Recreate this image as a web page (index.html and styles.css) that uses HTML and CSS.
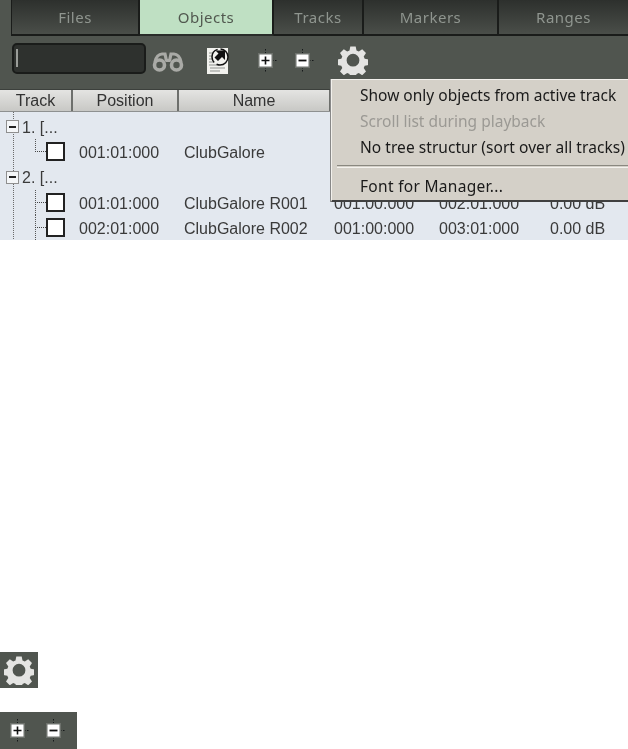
FILE: index.html
```html
<!DOCTYPE html>
<html lang="en">
<head>
<meta charset="utf-8">
<title>Object Manager</title>
<link rel="stylesheet" href="styles.css">
</head>
<body>
<svg class="defs" width="0" height="0" aria-hidden="true">
  <defs>
    <filter id="soft" x="-20%" y="-20%" width="140%" height="140%"><feGaussianBlur stdDeviation="0.45"/></filter>
    <symbol id="gear" viewBox="0 0 30 30">
      <path filter="url(#soft)" fill="#e4e4e2" fill-rule="evenodd" d="M12.300 1.500h5.400l.8 4 2.300 1 3.400-2.300 3.800 3.800-2.300 3.400 1 2.300 4 .8v5.400l-4 .8-1 2.300 2.300 3.400-3.800 3.800-3.400-2.300-2.300 1-.8 3.500h-5.400l-.8-3.500-2.300-1-3.400 2.300-3.800-3.800 2.300-3.400-1-2.300-4-.8v-5.400l4-.8 1-2.300-2.300-3.400 3.800-3.800 3.400 2.300 2.300-1zM15 8.800a6.400 6.400 0 1 0 0 12.800A6.400 6.400 0 0 0 15 8.800z"/>
    </symbol>
    <symbol id="plus" viewBox="0 0 20 24">
      <path fill="none" stroke="#15181a" stroke-width="1" stroke-dasharray="1.500 1.500" d="M8.500 0v5M8.500 18v6M15 11.500h5"/>
      <rect x="1" y="4" width="15" height="15" fill="#6d716c"/>
      <rect filter="url(#soft)" x="2.500" y="5.500" width="12" height="12" fill="#fff"/>
      <path fill="none" stroke="#111" stroke-width="1.600" d="M4.500 11.500h8M8.500 7.500v8"/>
    </symbol>
    <symbol id="minus" viewBox="0 0 20 24">
      <path fill="none" stroke="#15181a" stroke-width="1" stroke-dasharray="1.500 1.500" d="M8.500 0v5M8.500 18v6M15 11.500h5"/>
      <rect x="1" y="4" width="15" height="15" fill="#6d716c"/>
      <rect filter="url(#soft)" x="2.500" y="5.500" width="12" height="12" fill="#fff"/>
      <path fill="none" stroke="#111" stroke-width="1.800" d="M4.500 11.500h8"/>
    </symbol>
  </defs>
</svg>

<section class="panel">
  <nav class="tabs">
    <div class="tab tab-files">Files</div>
    <div class="tab tab-active">Objects</div>
    <div class="tab tab-tracks">Tracks</div>
    <div class="tab tab-markers">Markers</div>
    <div class="tab tab-ranges">Ranges</div>
  </nav>
  <div class="toolbar">
    <div class="search"><span class="caret"></span></div>
    <svg class="ico-bino" viewBox="0 0 32 20" aria-label="Find">
      <g filter="url(#soft)" fill="none" stroke="#a9aaa6">
        <circle cx="7.500" cy="13" r="5" stroke-width="3.600"/>
        <circle cx="24.500" cy="13" r="5" stroke-width="3.600"/>
        <path stroke-width="3.200" d="M3 10C4 5 7 2 10 2h3l1.500 7M29 10C28 5 25 2 22 2h-3l-1.500 7M13.500 8.500h5"/>
      </g>
    </svg>
    <svg class="ico-doc" viewBox="0 0 26 30" aria-label="Export">
      <path filter="url(#soft)" fill="#f2f2ee" d="M0 2h21v26H0z"/>
      <path stroke="#8f928f" stroke-width="1" d="M2 7h4M2 10h3M2 13h3M2 16h4M2 19h8M3 22h15M3 25h10"/>
      <circle cx="13" cy="11" r="8" fill="#f2f2ee"/>
      <circle cx="13" cy="11" r="8" fill="none" stroke="#111" stroke-width="1.500" stroke-dasharray="16 3"/>
      <path fill="#111" d="M8.500 4.500h9.500v9.500l-3-3-4 4-3.500-3.500 4-4z"/>
    </svg>
    <svg class="ico-plus"><use href="#plus"/></svg>
    <svg class="ico-minus"><use href="#minus"/></svg>
    <svg class="ico-gear"><use href="#gear"/></svg>
  </div>
</section>

<section class="list">
  <div class="head">
    <div class="hcell h-track">Track</div>
    <div class="hcell h-pos">Position</div>
    <div class="hcell h-name">Name</div>
    <div class="hcell h-rest"></div>
  </div>
  <div class="tree">
    <div class="row track"><span class="exp"></span><span class="tlabel">1. [...</span></div>
    <div class="row item last"><span class="branch"></span><span class="box"></span><span class="c-pos">001:01:000</span><span class="c-name">ClubGalore</span></div>
    <div class="row track"><span class="exp"></span><span class="tlabel">2. [...</span></div>
    <div class="row item"><span class="branch"></span><span class="box"></span><span class="c-pos">001:01:000</span><span class="c-name">ClubGalore R001</span><span class="c-a">001:00:000</span><span class="c-b">002:01:000</span><span class="c-c">0.00 dB</span></div>
    <div class="row item"><span class="branch"></span><span class="box"></span><span class="c-pos">002:01:000</span><span class="c-name">ClubGalore R002</span><span class="c-a">001:00:000</span><span class="c-b">003:01:000</span><span class="c-c">0.00 dB</span></div>
  </div>
</section>

<div class="menu">
  <div class="mi">Show only objects from active track</div>
  <div class="mi off">Scroll list during playback</div>
  <div class="mi wide">No tree structur (sort over all tracks)</div>
  <div class="sep"></div>
  <div class="mi wider">Font for Manager...</div>
</div>

<main class="samples">
  <div class="swatch sw-gear"><svg class="ico-gear"><use href="#gear"/></svg></div>
  <div class="swatch sw-pm">
    <svg class="ico-plus"><use href="#plus"/></svg>
    <svg class="ico-minus"><use href="#minus"/></svg>
  </div>
</main>
</body>
</html>
```

FILE: styles.css
```css
* { box-sizing: border-box; }
html, body { margin: 0; padding: 0; height: 749px; overflow: hidden; background: #fff; }
body { position: relative; font-family: "Liberation Sans", Arial, sans-serif; }
.defs { position: absolute; }
.panel, .list, .menu, .samples { filter: blur(.4px); }

.panel { background: #50554f; height: 90px; border-bottom: 1px solid #3c403c; }
.tabs { display: flex; height: 36px; padding-left: 11px; }
.tab {
  display: flex; align-items: center; justify-content: center; height: 36px;
  background: linear-gradient(#2d302d, #4a4e49);
  color: #8f958f; font: 15px "Noto Sans", sans-serif; letter-spacing: .5px;
  border-right: 2px solid #1a1c1a; border-bottom: 2px solid #1a1c1a;
}
.tab-files { width: 129px; border-left: 1px solid #1a1c1a; }
.tab-active { width: 134px; background: #bfe0c3; color: #51584f; border-bottom-color: #2a2d2a; }
.tab-tracks { width: 90px; }
.tab-markers { width: 135px; }
.tab-ranges { width: 129px; border-right: 0; }

.toolbar { display: flex; align-items: center; height: 53px; padding: 0 0 5px 12px; }
.search {
  width: 134px; height: 31px; margin-bottom: 4px; background: #2e312e; border: 2px solid #1a1c1a; border-radius: 5px;
  display: flex; align-items: center; padding-left: 2px;
}
.caret { width: 2px; height: 18px; background: #9a9d99; }
.ico-bino { width: 32px; height: 20px; margin: 4px 0 0 6px; }
.ico-doc { width: 26px; height: 30px; margin: 2px 0 0 23px; }
.ico-plus { width: 20px; height: 24px; margin: 2px 0 0 24px; }
.ico-minus { width: 20px; height: 24px; margin: 2px 0 0 17px; }
.ico-gear { width: 30px; height: 30px; }
.toolbar .ico-gear { margin-left: 24px; }

.head { display: flex; height: 22px; background: linear-gradient(#e4e4e2, #c8c8c5); border-bottom: 1px solid #8e9090; font-size: 16px; color: #333; }
.hcell { display: flex; align-items: center; justify-content: center; border-right: 2px solid #6d6f6c; }
.h-track { width: 73px; }
.h-pos { width: 106px; }
.h-name { width: 152px; }
.h-rest { flex: 1; border-right: 0; }

.tree {
  height: 128px; padding-top: 2px; color: #3a3a3a; font-size: 16px; overflow: hidden;
  background: repeating-linear-gradient(#6a6a6a 0 1px, transparent 1px 2px) 13px 0 / 1px 100% no-repeat #e3e8ef;
}
.row { display: flex; align-items: center; height: 25.300px; }
.track { padding-left: 6px; }
.exp { width: 13px; height: 13px; border: 1px solid #8f8f8f; background: linear-gradient(90deg, transparent 2px, #222 2px 9px, transparent 9px) center / 100% 2px no-repeat #f4f6f8; }
.tlabel { margin: 2px 0 0 3px; }
.item {
  padding-left: 35px;
  background: repeating-linear-gradient(#555 0 1px, transparent 1px 2px) 35px 0 / 1px 100% no-repeat;
}
.item.last { background-size: 1px 50%; }
.branch { width: 11px; height: 1px; border-top: 1px dotted #444; margin-bottom: 1px; }
.box { width: 19px; height: 19px; margin-bottom: 1px; background: #fff; border: 2px solid #222; }
.c-pos { margin: 2px 0 0 14px; width: 105px; }
.c-name { width: 150px; margin-top: 2px; }
.c-a { width: 105px; margin-top: 2px; }
.c-b { width: 111px; margin-top: 2px; }
.c-c { margin-top: 2px; }

.menu {
  position: absolute; left: 331px; top: 79px; width: 297px; height: 123px;
  background: #d4d0c8; border-top: 1px solid #f2f0ec; border-left: 1px solid #f2f0ec; border-bottom: 2px solid #404040;
  padding-top: 2px; font: 15.500px "Noto Sans", sans-serif; color: #1a1a1a; box-shadow: -1px 0 0 #888;
}
.mi { height: 26px; padding-left: 28px; display: flex; align-items: center; white-space: nowrap; }
.wide { letter-spacing: .05px; }
.wider { letter-spacing: .3px; }
.off { color: #9b9994; }
.sep { height: 3px; margin: 5px 0 5px 5px; border-top: 1px solid #8a8880; border-bottom: 1px solid #f4f2ee; }

.samples { position: absolute; left: 0; top: 652px; display: flex; flex-direction: column; gap: 24px; }
.swatch { background: #50554f; display: flex; align-items: center; }
.sw-gear { width: 38px; height: 36px; justify-content: center; }
.sw-pm { width: 77px; height: 37px; }
.sw-pm .ico-plus { margin: 0 0 0 9px; }
.sw-pm .ico-minus { margin: 0 0 0 16px; }
```
